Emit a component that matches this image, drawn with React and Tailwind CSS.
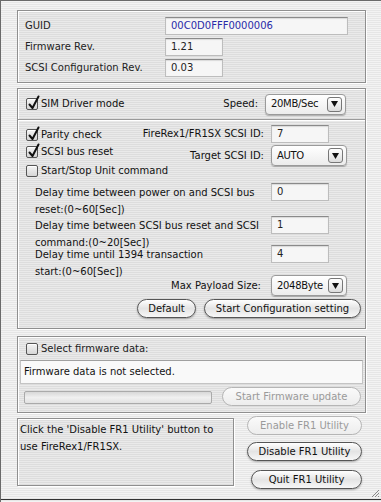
import React from 'react';

const font = { fontFamily: '"DejaVu Sans", "Liberation Sans", sans-serif' };

function Box({ className = '', children }) {
    return (
        <div className={`border border-[#8f8f8f] shadow-[1px_1px_0_#fff,inset_1px_1px_0_#fff] bg-black/[0.035] ${className}`}>
            {children}
        </div>
    );
}

function Field({ value, className = '', blue }) {
    return (
        <div className={`h-[18px] shrink-0 flex items-center px-[5px] bg-[#f6f6f6] border border-[#bdbdbd] border-t-[#8a8a8a] shadow-[inset_0_1px_1px_rgba(0,0,0,0.12)] ${blue ? 'text-[#2a2aa8]' : 'text-[#222]'} ${className}`}>
            {value}
        </div>
    );
}

function Popup({ value, className = '' }) {
    return (
        <div className={`h-[21px] shrink-0 flex items-center justify-between pl-[5px] pr-[3px] rounded-[4px] border border-[#9a9a9a] bg-gradient-to-b from-white to-[#ececec] shadow-[0_1px_1px_rgba(0,0,0,0.25)] text-[#111] ${className}`}>
            <span className="tracking-[-0.3px]">{value}</span>
            <span className="w-[15px] h-[15px] flex items-center justify-center rounded-[3px] border border-[#777] bg-gradient-to-b from-white to-[#dcdcdc]">
                <svg width="7" height="6" viewBox="0 0 7 6"><path d="M0 0h7L3.5 6z" fill="#111" /></svg>
            </span>
        </div>
    );
}

function Check({ checked, label, className = '' }) {
    return (
        <div className={`flex items-center gap-[3px] text-[#111] ${className}`}>
            <span className="relative shrink-0 w-[12px] h-[12px] rounded-[2px] border border-[#555] bg-gradient-to-b from-[#f4f4f4] to-[#d6d6d6] shadow-[inset_0_1px_0_#fff]">
                {checked && (
                    <svg className="absolute left-[1px] top-[-4px]" width="12" height="15" viewBox="0 0 12 15">
                        <path d="M1.5 9.5 L4.5 13 L10.5 1.5" stroke="#111" strokeWidth="2" fill="none" strokeLinecap="round" strokeLinejoin="round" />
                    </svg>
                )}
            </span>
            <span className="whitespace-nowrap">{label}</span>
        </div>
    );
}

function AquaButton({ children, disabled, className = '' }) {
    return (
        <div className={`h-[19px] shrink-0 flex items-center justify-center whitespace-nowrap rounded-full border ${disabled ? 'border-[#b5b5b5] text-[#9a9a9a] bg-gradient-to-b from-[#fafafa] to-[#ededed]' : 'border-[#555] text-[#111] bg-gradient-to-b from-white via-[#e4e4e4] to-[#f7f7f7] shadow-[0_1px_2px_rgba(0,0,0,0.3)]'} ${className}`}>
            {children}
        </div>
    );
}

function DelayRow({ lines, value, className = '' }) {
    return (
        <div className={`flex items-start pl-[9px] ${className}`}>
            <div className="w-[236px] leading-[17px] mt-[1px] whitespace-nowrap">
                {lines[0]}<br />{lines[1]}
            </div>
            <Field value={value} className="w-[58px]" />
        </div>
    );
}

export default function App() {
    return (
        <div
            style={font}
            className="relative w-[381px] h-[502px] overflow-hidden text-[10px] leading-none border-t border-l border-[#6a6a6a] bg-[repeating-linear-gradient(to_bottom,#f3f3f3_0px,#f3f3f3_1px,#e6e6e6_1px,#e6e6e6_2px)]"
        >
            <div className="flex flex-col pl-[16px] pr-[15px] pt-[9px]">
                {/* device info */}
                <Box className="h-[73px] pt-[6px] px-[7px] flex flex-col gap-[3px] text-[#222]">
                    <div className="flex items-center">
                        <span className="w-[140px]">GUID</span>
                        <Field value="00C0D0FFF0000006" blue className="w-[183px]" />
                    </div>
                    <div className="flex items-center">
                        <span className="w-[140px]">Firmware Rev.</span>
                        <Field value="1.21" className="w-[58px]" />
                    </div>
                    <div className="flex items-center">
                        <span className="w-[140px]">SCSI Configuration Rev.</span>
                        <Field value="0.03" className="w-[58px]" />
                    </div>
                </Box>

                {/* SIM driver settings */}
                <Box className="mt-[5px] h-[241px] flex flex-col text-[#111]">
                    <div className="h-[31px] shrink-0 flex items-center justify-between pl-[8px] pr-[19px] border-b border-[#9a9a9a] shadow-[0_1px_0_#fff]">
                        <Check checked label="SIM Driver mode" />
                        <div className="flex items-center gap-[7px]">
                            <span>Speed:</span>
                            <Popup value="20MB/Sec" className="w-[81px]" />
                        </div>
                    </div>
                    <div className="flex flex-col pl-[8px]">
                        <div className="h-[18px] mt-[5px] flex items-center">
                            <Check checked label="Parity check" className="flex-1 mt-[2px]" />
                            <span className="whitespace-nowrap">FireRex1/FR1SX SCSI ID:</span>
                            <Field value="7" className="ml-[7px] mr-[36px] w-[58px]" />
                        </div>
                        <div className="h-[21px] mt-[2px] flex items-center">
                            <Check checked label="SCSI bus reset" className="flex-1 self-start mt-[1px]" />
                            <span className="whitespace-nowrap">Target SCSI ID:</span>
                            <Popup value="AUTO" className="ml-[7px] mr-[18px] w-[76px]" />
                        </div>
                        <Check label="Start/Stop Unit command" className="h-[12px] -mt-[1px]" />

                        <DelayRow className="h-[33px] mt-[6px]" lines={['Delay time between power on and SCSI bus', 'reset:(0~60[Sec])']} value="0" />
                        <DelayRow className="h-[29px]" lines={['Delay time between SCSI bus reset and SCSI', 'command:(0~20[Sec])']} value="1" />
                        <DelayRow className="h-[30px]" lines={['Delay time until 1394 transaction', 'start:(0~60[Sec])']} value="4" />

                        <div className="h-[21px] flex items-center justify-end pr-[18px]">
                            <span>Max Payload Size:</span>
                            <Popup value="2048Byte" className="ml-[10px] w-[76px]" />
                        </div>
                        <div className="flex justify-end gap-[8px] mt-[3px] pr-[4px]">
                            <AquaButton className="w-[59px]">Default</AquaButton>
                            <AquaButton className="w-[157px]">Start Configuration setting</AquaButton>
                        </div>
                    </div>
                </Box>

                {/* firmware update */}
                <Box className="mt-[7px] h-[77px] flex flex-col px-[2px] pt-[6px]">
                    <Check label="Select firmware data:" className="pl-[6px] text-[#222]" />
                    <div className="mt-[5px] h-[24px] flex items-center px-[3px] bg-[#f9f9f9] border border-[#c4c4c4] border-t-[#a0a0a0] text-[#111]">
                        Firmware data is not selected.
                    </div>
                    <div className="flex items-center justify-between mt-[3px] pl-[4px] pr-[2px]">
                        <div className="w-[188px] h-[13px] mt-[2px] rounded-[2px] border border-[#aaa] bg-gradient-to-b from-[#d8d8d8] via-[#f0f0f0] to-[#e2e2e2]" />
                        <AquaButton disabled className="w-[139px]">Start Firmware update</AquaButton>
                    </div>
                </Box>

                {/* utility state */}
                <div className="flex mt-[3px]">
                    <Box className="w-[217px] h-[68px] mt-[2px] px-[2px] pt-[2px] leading-[17px] text-[#111]">
                        Click the 'Disable FR1 Utility' button to use FireRex1/FR1SX.
                    </Box>
                    <div className="flex flex-col items-end w-[128px] gap-[7px]">
                        <AquaButton disabled className="w-[115px] h-[18px]">Enable FR1 Utility</AquaButton>
                        <AquaButton className="w-[115px]">Disable FR1 Utility</AquaButton>
                        <AquaButton className="w-[111px] mt-[2px]">Quit FR1 Utility</AquaButton>
                    </div>
                </div>
            </div>

            {/* bottom edge and grow box */}
            <div className="absolute left-0 right-0 bottom-[2px] h-px bg-[#333]" />
            <svg className="absolute right-[1px] bottom-[4px]" width="10" height="10" viewBox="0 0 10 10">
                <path d="M9 2L2 9M9 5L5 9M9 8L8 9" stroke="#888" strokeWidth="1" />
            </svg>
        </div>
    );
}
